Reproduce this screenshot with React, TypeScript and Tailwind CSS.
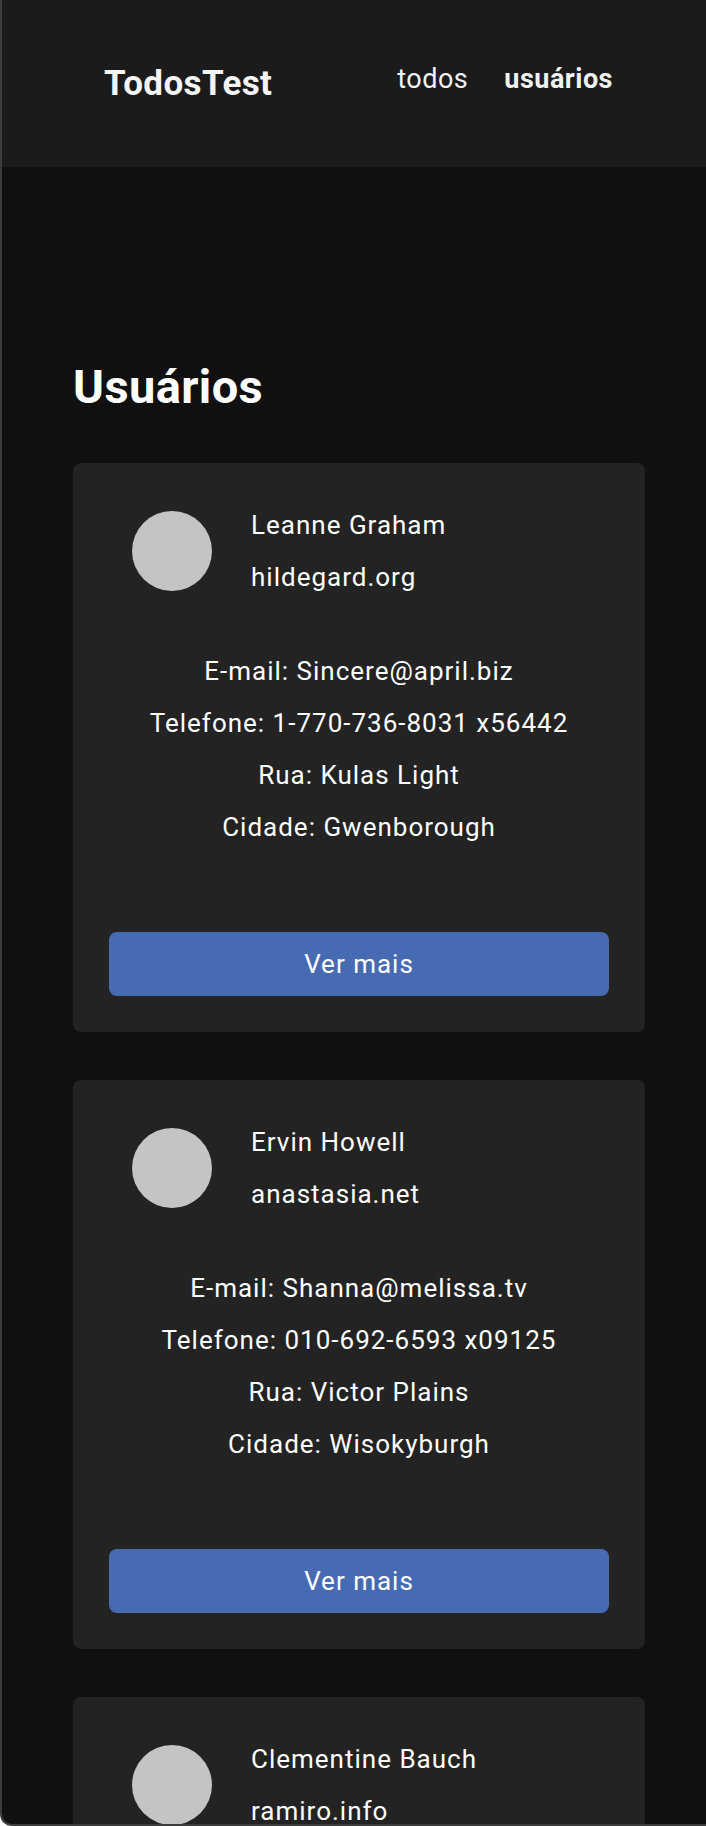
const users = [
  {
    name: "Leanne Graham",
    website: "hildegard.org",
    email: "Sincere@april.biz",
    phone: "1-770-736-8031 x56442",
    street: "Kulas Light",
    city: "Gwenborough",
  },
  {
    name: "Ervin Howell",
    website: "anastasia.net",
    email: "Shanna@melissa.tv",
    phone: "010-692-6593 x09125",
    street: "Victor Plains",
    city: "Wisokyburgh",
  },
  {
    name: "Clementine Bauch",
    website: "ramiro.info",
    email: "Nathan@yesenia.net",
    phone: "1-463-123-4447",
    street: "Douglas Extension",
    city: "McKenziehaven",
  },
];

type User = (typeof users)[number];

const UserCard = ({ user }: { user: User }) => {
  return (
    <div className="w-[572px] rounded-lg bg-[#232323] p-9 text-[26px] leading-[52px] tracking-[1px] text-white">
      <div className="flex items-center gap-[39px] pl-[23px]">
        <div className="h-20 w-20 shrink-0 rounded-full bg-[#c4c4c4]" />
        <div>
          <p>{user.name}</p>
          <p>{user.website}</p>
        </div>
      </div>

      <div className="mt-[42px] text-center">
        <p>E-mail: {user.email}</p>
        <p>Telefone: {user.phone}</p>
        <p>Rua: {user.street}</p>
        <p>Cidade: {user.city}</p>
      </div>

      <button className="mt-[79px] flex h-16 w-full items-center justify-center rounded-lg bg-[#466bb2] tracking-[1px] text-white">
        Ver mais
      </button>
    </div>
  );
};

export default function App() {
  return (
    <div
      className="h-[1826px] w-[706px] overflow-hidden rounded-bl-[12px] border-b-2 border-l-2 border-[#3c3c3c] bg-[#101010]"
      style={{ fontFamily: "Roboto, 'Liberation Sans', sans-serif" }}
    >
      <header className="flex h-[167px] items-center justify-between bg-[#1b1b1b] pl-[102px] pr-[93px]">
        <h1 className="text-[35px] font-bold leading-[40px] tracking-[0.4px] text-[#f4f4f4]">TodosTest</h1>
        <nav className="mb-[10px] flex gap-[36px] text-[27px] leading-[32px] tracking-[0.5px] text-[#f2f2f2]">
          <a href="#">todos</a>
          <a href="#" className="font-bold">
            usuários
          </a>
        </nav>
      </header>

      <main className="pl-[71px] pt-[192px]">
        <h2 className="mb-12 text-[47px] font-bold leading-[56px] tracking-[0.4px] text-white">Usuários</h2>
        <div className="flex flex-col gap-12">
          {users.map((user) => (
            <UserCard key={user.name} user={user} />
          ))}
        </div>
      </main>
    </div>
  );
}
